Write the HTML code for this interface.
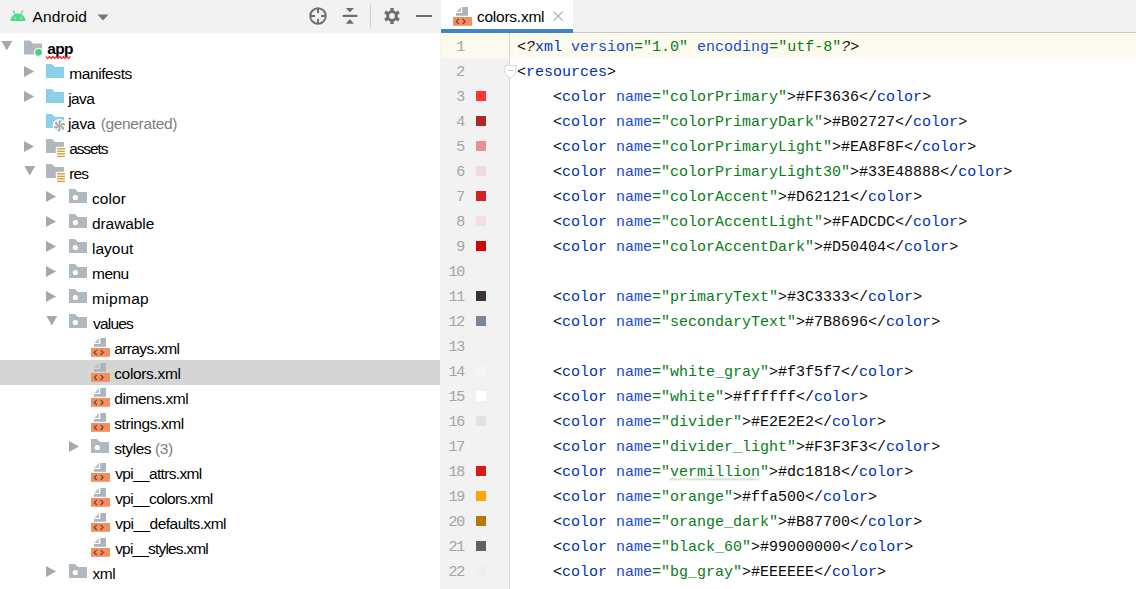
<!DOCTYPE html>
<html><head><meta charset="utf-8"><style>
*{margin:0;padding:0;box-sizing:border-box}
html,body{width:1136px;height:589px;overflow:hidden;background:#fff}
body{position:relative;font-family:"Liberation Sans",sans-serif}
#left{position:absolute;left:0;top:0;width:440px;height:589px;background:#fff;overflow:hidden}
#lhead{position:absolute;left:0;top:0;width:440px;height:33px;background:#f2f2f2}
#vsep{position:absolute;left:440px;top:0;width:1px;height:589px;background:#f3f3f3}
#right{position:absolute;left:441px;top:0;width:695px;height:589px;background:#fff;overflow:hidden}
#tabbar{position:absolute;left:0;top:0;width:695px;height:33px;background:#f2f2f2;border-bottom:1px solid #cacaca}
#tab{position:absolute;left:0;top:0;width:132px;height:33px;background:#fff}
#tabline{position:absolute;left:0;top:29px;width:132px;height:4px;background:#4083c9}
.ic{position:absolute;display:block}
.row{position:absolute;left:0;width:440px;height:25px;font-size:15.5px;color:#000;white-space:nowrap}
.row.sel{background:#d5d5d5}
.row .t{position:absolute;top:5px}
.gray{color:#808080}
.line{position:absolute;left:0;width:695px;height:25px;font-family:"Liberation Mono",monospace;font-size:15px;white-space:pre}
.line.cur{background:#fcfaed}
.ln{position:absolute;right:672px;top:6px;color:#a4a4a4;letter-spacing:-1.2px}
.code{position:absolute;left:76px;top:6px;color:#080808}
#gutter{position:absolute;left:0;top:33px;width:68px;height:556px;background:#f2f2f2}
#gsep{position:absolute;left:68px;top:33px;width:1px;height:556px;background:#d8d8d8}
.sw{position:absolute;left:35px;top:8px;width:10px;height:10px}
.tg{color:#0033b3}
.at{color:#174ad4}
.vl{color:#067d17}
#lhead .hname{position:absolute;left:32.6px;top:8px;font-size:15.5px;color:#000;letter-spacing:0.15px}
</style></head><body>
<div id="left">

<div id="lhead">
 <svg class="ic" style="left:10px;top:10px" width="17" height="12"><path d="M3.3 0.9 L5 4.3 M12.6 0.9 L10.9 4.3" stroke="#4bdd8a" stroke-width="1.25" stroke-linecap="round"/><path d="M0.4 10.9 A7.55 7.4 0 0 1 15.5 10.9 Z" fill="#4bdd8a"/><circle cx="4.8" cy="7.9" r="0.85" fill="#a8ecc4"/><circle cx="11.1" cy="7.9" r="0.85" fill="#a8ecc4"/></svg>
 <span class="hname">Android</span>
 <svg class="ic" style="left:97px;top:14px" width="12" height="7"><path d="M0.5 0.5 H11.5 L6 6.5 Z" fill="#767676"/></svg>
 <svg class="ic" style="left:309px;top:7px" width="18" height="18"><circle cx="9" cy="9" r="7.8" stroke="#6e6e6e" stroke-width="1.9" fill="none"/><path d="M9 1 V6 M9 12 V17 M1 9 H6 M12 9 H17" stroke="#6e6e6e" stroke-width="1.9"/></svg>
 <svg class="ic" style="left:342px;top:8px" width="16" height="16"><path d="M3.9 0.1 H11.9 L7.9 4.6 Z M3.9 15.8 H11.9 L7.9 11.1 Z" fill="#6e6e6e"/><rect x="0.5" y="6.8" width="15" height="2.2" rx="1" fill="#6e6e6e"/></svg>
 <div style="position:absolute;left:370px;top:4px;width:1px;height:24px;background:#cfcfcf"></div>
 <svg class="ic" style="left:384px;top:8px" width="16" height="16"><g fill="#6e6e6e"><circle cx="8" cy="8" r="5.8"/><rect x="6.3" y="0" width="3.4" height="16"/><rect x="6.3" y="0" width="3.4" height="16" transform="rotate(60 8 8)"/><rect x="6.3" y="0" width="3.4" height="16" transform="rotate(120 8 8)"/></g><circle cx="8" cy="8" r="2.9" fill="#f2f2f2"/></svg>
 <div style="position:absolute;left:416px;top:15px;width:16px;height:2px;background:#6e6e6e"></div>
</div>

<div class="row" style="top:35px"><svg class="ic" style="left:1px;top:0px" width="14" height="25"><path d="M0.4 6.1 H11.2 L5.8 15.4 Z" fill="#a8a8a8"/></svg><svg class="ic" style="left:24px;top:0px" width="22" height="25"><g transform="translate(0 5.6)"><path d="M0 0 H6 L9 3 H18 V14 H0 Z" fill="#afb8bf"/><circle cx="14.5" cy="11.7" r="4.6" fill="#fff"/><circle cx="14.5" cy="11.7" r="3.4" fill="#3dd67f"/></g></svg><span class="t" style="left:47.30px;letter-spacing:-0.750px"><b>app</b></span><svg class="ic" style="left:0;top:-35px" width="80" height="62"><polyline points="46.00,56.3 47.75,58.5 49.50,56.3 51.25,58.5 53.00,56.3 54.75,58.5 56.50,56.3 58.25,58.5 60.00,56.3 61.75,58.5 63.50,56.3 65.25,58.5 67.00,56.3 68.75,58.5 70.50,56.3" fill="none" stroke="#ff2020" stroke-width="1.1"/></svg></div><div class="row" style="top:60px"><svg class="ic" style="left:24px;top:0px" width="12" height="25"><path d="M0 6.1 V17.1 L10.1 11.6 Z" fill="#a8a8a8"/></svg><svg class="ic" style="left:46px;top:0px" width="22" height="25"><g transform="translate(0 4)"><path d="M0 0 H6 L9 3 H18 V14 H0 Z" fill="#8ccfe9"/></g></svg><span class="t" style="left:69.20px;letter-spacing:-0.400px">manifests</span></div><div class="row" style="top:85px"><svg class="ic" style="left:24px;top:0px" width="12" height="25"><path d="M0 6.1 V17.1 L10.1 11.6 Z" fill="#a8a8a8"/></svg><svg class="ic" style="left:46px;top:0px" width="22" height="25"><g transform="translate(0 4)"><path d="M0 0 H6 L9 3 H18 V14 H0 Z" fill="#8ccfe9"/></g></svg><span class="t" style="left:68.30px;letter-spacing:-0.637px">java</span></div><div class="row" style="top:110px"><svg class="ic" style="left:46px;top:0px" width="22" height="25"><g transform="translate(0 4)"><path d="M0 0 H6 L9 3 H18 V14 H0 Z" fill="#8ccfe9"/><circle cx="13.5" cy="11.8" r="6.9" fill="#fff"/><g fill="#9ca5ac" transform="translate(13.5 11.8)"><path d="M0 0 C-1.3 -1.8 -1.6 -3.9 -0.2 -5.1 C0.9 -5.7 2.1 -5.4 2.7 -4.7 C1.2 -4.3 0.4 -2.6 0 0 Z" transform="rotate(0)"/><path d="M0 0 C-1.3 -1.8 -1.6 -3.9 -0.2 -5.1 C0.9 -5.7 2.1 -5.4 2.7 -4.7 C1.2 -4.3 0.4 -2.6 0 0 Z" transform="rotate(60)"/><path d="M0 0 C-1.3 -1.8 -1.6 -3.9 -0.2 -5.1 C0.9 -5.7 2.1 -5.4 2.7 -4.7 C1.2 -4.3 0.4 -2.6 0 0 Z" transform="rotate(120)"/><path d="M0 0 C-1.3 -1.8 -1.6 -3.9 -0.2 -5.1 C0.9 -5.7 2.1 -5.4 2.7 -4.7 C1.2 -4.3 0.4 -2.6 0 0 Z" transform="rotate(180)"/><path d="M0 0 C-1.3 -1.8 -1.6 -3.9 -0.2 -5.1 C0.9 -5.7 2.1 -5.4 2.7 -4.7 C1.2 -4.3 0.4 -2.6 0 0 Z" transform="rotate(240)"/><path d="M0 0 C-1.3 -1.8 -1.6 -3.9 -0.2 -5.1 C0.9 -5.7 2.1 -5.4 2.7 -4.7 C1.2 -4.3 0.4 -2.6 0 0 Z" transform="rotate(300)"/><circle r="1.3"/></g></g></svg><span class="t" style="left:68.00px;letter-spacing:-0.340px">java<span class="gray" style="margin-left:1.6px"> (generated)</span></span></div><div class="row" style="top:135px"><svg class="ic" style="left:24px;top:0px" width="12" height="25"><path d="M0 6.1 V17.1 L10.1 11.6 Z" fill="#a8a8a8"/></svg><svg class="ic" style="left:46px;top:0px" width="22" height="25"><g transform="translate(0 4)"><path d="M0 0 H6 L9 3 H18 V14 H0 Z" fill="#afb8bf"/><rect x="9.8" y="7.8" width="10" height="12" fill="#fff"/><rect x="11.1" y="9" width="7.8" height="4" fill="#f7e8cc"/><rect x="11.1" y="9" width="7.8" height="1.4" fill="#e0a645"/><rect x="11.1" y="11.9" width="7.8" height="1.1" fill="#dd9f38"/><rect x="11.1" y="14.1" width="7.8" height="3.9" fill="#f7e8cc"/><rect x="11.1" y="14.1" width="7.8" height="1.4" fill="#e0a645"/><rect x="11.1" y="17" width="7.8" height="1.1" fill="#dd9f38"/></g></svg><span class="t" style="left:69.20px;letter-spacing:-1.120px">assets</span></div><div class="row" style="top:160px"><svg class="ic" style="left:24px;top:0px" width="14" height="25"><path d="M0.4 6.1 H11.2 L5.8 15.4 Z" fill="#a8a8a8"/></svg><svg class="ic" style="left:46px;top:0px" width="22" height="25"><g transform="translate(0 4)"><path d="M0 0 H6 L9 3 H18 V14 H0 Z" fill="#afb8bf"/><rect x="9.8" y="7.8" width="10" height="12" fill="#fff"/><rect x="11.1" y="9" width="7.8" height="4" fill="#f7e8cc"/><rect x="11.1" y="9" width="7.8" height="1.4" fill="#e0a645"/><rect x="11.1" y="11.9" width="7.8" height="1.1" fill="#dd9f38"/><rect x="11.1" y="14.1" width="7.8" height="3.9" fill="#f7e8cc"/><rect x="11.1" y="14.1" width="7.8" height="1.4" fill="#e0a645"/><rect x="11.1" y="17" width="7.8" height="1.1" fill="#dd9f38"/></g></svg><span class="t" style="left:69.20px;letter-spacing:-0.900px">res</span></div><div class="row" style="top:185px"><svg class="ic" style="left:46px;top:0px" width="12" height="25"><path d="M0 6.1 V17.1 L10.1 11.6 Z" fill="#a8a8a8"/></svg><svg class="ic" style="left:69px;top:0px" width="22" height="25"><g transform="translate(0 4)"><path d="M0 0 H6 L9 3 H18 V14 H0 Z" fill="#afb8bf"/><circle cx="6.35" cy="8.5" r="2.6" fill="#fff"/></g></svg><span class="t" style="left:92.00px;letter-spacing:0.100px">color</span></div><div class="row" style="top:210px"><svg class="ic" style="left:46px;top:0px" width="12" height="25"><path d="M0 6.1 V17.1 L10.1 11.6 Z" fill="#a8a8a8"/></svg><svg class="ic" style="left:69px;top:0px" width="22" height="25"><g transform="translate(0 4)"><path d="M0 0 H6 L9 3 H18 V14 H0 Z" fill="#afb8bf"/><circle cx="6.35" cy="8.5" r="2.6" fill="#fff"/></g></svg><span class="t" style="left:92.00px;letter-spacing:-0.086px">drawable</span></div><div class="row" style="top:235px"><svg class="ic" style="left:46px;top:0px" width="12" height="25"><path d="M0 6.1 V17.1 L10.1 11.6 Z" fill="#a8a8a8"/></svg><svg class="ic" style="left:69px;top:0px" width="22" height="25"><g transform="translate(0 4)"><path d="M0 0 H6 L9 3 H18 V14 H0 Z" fill="#afb8bf"/><circle cx="6.35" cy="8.5" r="2.6" fill="#fff"/></g></svg><span class="t" style="left:92.00px;letter-spacing:-0.000px">layout</span></div><div class="row" style="top:260px"><svg class="ic" style="left:46px;top:0px" width="12" height="25"><path d="M0 6.1 V17.1 L10.1 11.6 Z" fill="#a8a8a8"/></svg><svg class="ic" style="left:69px;top:0px" width="22" height="25"><g transform="translate(0 4)"><path d="M0 0 H6 L9 3 H18 V14 H0 Z" fill="#afb8bf"/><circle cx="6.35" cy="8.5" r="2.6" fill="#fff"/></g></svg><span class="t" style="left:92.00px;letter-spacing:-0.533px">menu</span></div><div class="row" style="top:285px"><svg class="ic" style="left:46px;top:0px" width="12" height="25"><path d="M0 6.1 V17.1 L10.1 11.6 Z" fill="#a8a8a8"/></svg><svg class="ic" style="left:69px;top:0px" width="22" height="25"><g transform="translate(0 4)"><path d="M0 0 H6 L9 3 H18 V14 H0 Z" fill="#afb8bf"/><circle cx="6.35" cy="8.5" r="2.6" fill="#fff"/></g></svg><span class="t" style="left:92.00px;letter-spacing:0.320px">mipmap</span></div><div class="row" style="top:310px"><svg class="ic" style="left:46px;top:0px" width="14" height="25"><path d="M0.4 6.1 H11.2 L5.8 15.4 Z" fill="#a8a8a8"/></svg><svg class="ic" style="left:69px;top:0px" width="22" height="25"><g transform="translate(0 4)"><path d="M0 0 H6 L9 3 H18 V14 H0 Z" fill="#afb8bf"/><circle cx="6.35" cy="8.5" r="2.6" fill="#fff"/></g></svg><span class="t" style="left:93.00px;letter-spacing:-0.800px">values</span></div><div class="row" style="top:335px"><svg class="ic" style="left:91px;top:0px" width="20" height="25"><path d="M3 3 H15 V11.7 H3 Z M3 3 V9.1 H9.3 V3 Z" fill="#abb5bd" fill-rule="evenodd"/><path d="M3.3 7.9 L7.9 3.0 V7.9 Z" fill="#b9c1c7"/><rect x="0" y="13" width="19" height="8.8" fill="#f58e5c"/><path d="M5.8 14.8 L3.3 17.4 L5.8 20 M9.6 14.8 L12.1 17.4 L9.6 20" stroke="#6a4634" stroke-width="1.2" fill="none"/></svg><span class="t" style="left:114.20px;letter-spacing:-0.622px">arrays.xml</span></div><div class="row sel" style="top:360px"><svg class="ic" style="left:91px;top:0px" width="20" height="25"><path d="M3 3 H15 V11.7 H3 Z M3 3 V9.1 H9.3 V3 Z" fill="#abb5bd" fill-rule="evenodd"/><path d="M3.3 7.9 L7.9 3.0 V7.9 Z" fill="#b9c1c7"/><rect x="0" y="13" width="19" height="8.8" fill="#f58e5c"/><path d="M5.8 14.8 L3.3 17.4 L5.8 20 M9.6 14.8 L12.1 17.4 L9.6 20" stroke="#6a4634" stroke-width="1.2" fill="none"/></svg><span class="t" style="left:114.20px;letter-spacing:-0.333px">colors.xml</span></div><div class="row" style="top:385px"><svg class="ic" style="left:91px;top:0px" width="20" height="25"><path d="M3 3 H15 V11.7 H3 Z M3 3 V9.1 H9.3 V3 Z" fill="#abb5bd" fill-rule="evenodd"/><path d="M3.3 7.9 L7.9 3.0 V7.9 Z" fill="#b9c1c7"/><rect x="0" y="13" width="19" height="8.8" fill="#f58e5c"/><path d="M5.8 14.8 L3.3 17.4 L5.8 20 M9.6 14.8 L12.1 17.4 L9.6 20" stroke="#6a4634" stroke-width="1.2" fill="none"/></svg><span class="t" style="left:114.20px;letter-spacing:-0.422px">dimens.xml</span></div><div class="row" style="top:410px"><svg class="ic" style="left:91px;top:0px" width="20" height="25"><path d="M3 3 H15 V11.7 H3 Z M3 3 V9.1 H9.3 V3 Z" fill="#abb5bd" fill-rule="evenodd"/><path d="M3.3 7.9 L7.9 3.0 V7.9 Z" fill="#b9c1c7"/><rect x="0" y="13" width="19" height="8.8" fill="#f58e5c"/><path d="M5.8 14.8 L3.3 17.4 L5.8 20 M9.6 14.8 L12.1 17.4 L9.6 20" stroke="#6a4634" stroke-width="1.2" fill="none"/></svg><span class="t" style="left:114.20px;letter-spacing:-0.400px">strings.xml</span></div><div class="row" style="top:435px"><svg class="ic" style="left:69px;top:0px" width="12" height="25"><path d="M0 6.1 V17.1 L10.1 11.6 Z" fill="#a8a8a8"/></svg><svg class="ic" style="left:91px;top:0px" width="22" height="25"><g transform="translate(0 4)"><path d="M0 0 H6 L9 3 H18 V14 H0 Z" fill="#afb8bf"/><circle cx="6.35" cy="8.5" r="2.6" fill="#fff"/></g></svg><span class="t" style="left:114.20px;letter-spacing:-0.444px">styles<span class="gray" style="margin-left:0px"> (3)</span></span></div><div class="row" style="top:460px"><svg class="ic" style="left:91px;top:0px" width="20" height="25"><path d="M3 3 H15 V11.7 H3 Z M3 3 V9.1 H9.3 V3 Z" fill="#abb5bd" fill-rule="evenodd"/><path d="M3.3 7.9 L7.9 3.0 V7.9 Z" fill="#b9c1c7"/><rect x="0" y="13" width="19" height="8.8" fill="#f58e5c"/><path d="M5.8 14.8 L3.3 17.4 L5.8 20 M9.6 14.8 L12.1 17.4 L9.6 20" stroke="#6a4634" stroke-width="1.2" fill="none"/></svg><span class="t" style="left:115.20px;letter-spacing:-0.662px">vpi__attrs.xml</span></div><div class="row" style="top:485px"><svg class="ic" style="left:91px;top:0px" width="20" height="25"><path d="M3 3 H15 V11.7 H3 Z M3 3 V9.1 H9.3 V3 Z" fill="#abb5bd" fill-rule="evenodd"/><path d="M3.3 7.9 L7.9 3.0 V7.9 Z" fill="#b9c1c7"/><rect x="0" y="13" width="19" height="8.8" fill="#f58e5c"/><path d="M5.8 14.8 L3.3 17.4 L5.8 20 M9.6 14.8 L12.1 17.4 L9.6 20" stroke="#6a4634" stroke-width="1.2" fill="none"/></svg><span class="t" style="left:115.20px;letter-spacing:-0.629px">vpi__colors.xml</span></div><div class="row" style="top:510px"><svg class="ic" style="left:91px;top:0px" width="20" height="25"><path d="M3 3 H15 V11.7 H3 Z M3 3 V9.1 H9.3 V3 Z" fill="#abb5bd" fill-rule="evenodd"/><path d="M3.3 7.9 L7.9 3.0 V7.9 Z" fill="#b9c1c7"/><rect x="0" y="13" width="19" height="8.8" fill="#f58e5c"/><path d="M5.8 14.8 L3.3 17.4 L5.8 20 M9.6 14.8 L12.1 17.4 L9.6 20" stroke="#6a4634" stroke-width="1.2" fill="none"/></svg><span class="t" style="left:115.20px;letter-spacing:-0.525px">vpi__defaults.xml</span></div><div class="row" style="top:535px"><svg class="ic" style="left:91px;top:0px" width="20" height="25"><path d="M3 3 H15 V11.7 H3 Z M3 3 V9.1 H9.3 V3 Z" fill="#abb5bd" fill-rule="evenodd"/><path d="M3.3 7.9 L7.9 3.0 V7.9 Z" fill="#b9c1c7"/><rect x="0" y="13" width="19" height="8.8" fill="#f58e5c"/><path d="M5.8 14.8 L3.3 17.4 L5.8 20 M9.6 14.8 L12.1 17.4 L9.6 20" stroke="#6a4634" stroke-width="1.2" fill="none"/></svg><span class="t" style="left:115.20px;letter-spacing:-0.829px">vpi__styles.xml</span></div><div class="row" style="top:560px"><svg class="ic" style="left:46px;top:0px" width="12" height="25"><path d="M0 6.1 V17.1 L10.1 11.6 Z" fill="#a8a8a8"/></svg><svg class="ic" style="left:69px;top:0px" width="22" height="25"><g transform="translate(0 4)"><path d="M0 0 H6 L9 3 H18 V14 H0 Z" fill="#afb8bf"/><circle cx="6.35" cy="8.5" r="2.6" fill="#fff"/></g></svg><span class="t" style="left:92.60px;letter-spacing:-0.500px">xml</span></div>
</div>
<div id="vsep"></div>
<div id="right">

<div id="tabbar"></div>
<div id="tab">
 <svg class="ic" style="left:12px;top:4.2px" width="20" height="25"><path d="M3 3 H15 V11.7 H3 Z M3 3 V9.1 H9.3 V3 Z" fill="#abb5bd" fill-rule="evenodd"/><path d="M3.3 7.9 L7.9 3.0 V7.9 Z" fill="#b9c1c7"/><rect x="0" y="13" width="19" height="8.8" fill="#f58e5c"/><path d="M5.8 14.8 L3.3 17.4 L5.8 20 M9.6 14.8 L12.1 17.4 L9.6 20" stroke="#6a4634" stroke-width="1.2" fill="none"/></svg>
 <span style="position:absolute;left:36px;top:8px;font-size:15.5px;color:#000;letter-spacing:-0.25px">colors.xml</span>
 <svg class="ic" style="left:112px;top:11px" width="11" height="11"><path d="M0.6 0.6 L9.6 9.6 M9.6 0.6 L0.6 9.6" stroke="#a6a6a6" stroke-width="1.1"/></svg>
</div>
<div id="tabline"></div>

<div id="gutter"></div>
<div class="line cur" style="top:33px"><span class="ln">1</span><span class="code">&lt;<i>?</i><span class="tg">xml</span> <span class="at">version</span><span class="vl">="1.0"</span> <span class="at">encoding</span><span class="vl">="utf-8"</span><i>?</i>&gt;</span></div><div class="line" style="top:58px"><span class="ln">2</span><span class="code">&lt;<span class="tg">resources</span>&gt;</span></div><div class="line" style="top:83px"><span class="ln">3</span><div class="sw" style="background:#FF3636"></div><span class="code">    &lt;<span class="tg">color</span> <span class="at">name</span><span class="vl">="colorPrimary"</span>&gt;#FF3636&lt;/<span class="tg">color</span>&gt;</span></div><div class="line" style="top:108px"><span class="ln">4</span><div class="sw" style="background:#B02727"></div><span class="code">    &lt;<span class="tg">color</span> <span class="at">name</span><span class="vl">="colorPrimaryDark"</span>&gt;#B02727&lt;/<span class="tg">color</span>&gt;</span></div><div class="line" style="top:133px"><span class="ln">5</span><div class="sw" style="background:#EA8F8F"></div><span class="code">    &lt;<span class="tg">color</span> <span class="at">name</span><span class="vl">="colorPrimaryLight"</span>&gt;#EA8F8F&lt;/<span class="tg">color</span>&gt;</span></div><div class="line" style="top:158px"><span class="ln">6</span><div class="sw" style="background:rgb(238,219,219)"></div><span class="code">    &lt;<span class="tg">color</span> <span class="at">name</span><span class="vl">="colorPrimaryLight30"</span>&gt;#33E48888&lt;/<span class="tg">color</span>&gt;</span></div><div class="line" style="top:183px"><span class="ln">7</span><div class="sw" style="background:#D62121"></div><span class="code">    &lt;<span class="tg">color</span> <span class="at">name</span><span class="vl">="colorAccent"</span>&gt;#D62121&lt;/<span class="tg">color</span>&gt;</span></div><div class="line" style="top:208px"><span class="ln">8</span><div class="sw" style="background:#FADCDC"></div><span class="code">    &lt;<span class="tg">color</span> <span class="at">name</span><span class="vl">="colorAccentLight"</span>&gt;#FADCDC&lt;/<span class="tg">color</span>&gt;</span></div><div class="line" style="top:233px"><span class="ln">9</span><div class="sw" style="background:#D50404"></div><span class="code">    &lt;<span class="tg">color</span> <span class="at">name</span><span class="vl">="colorAccentDark"</span>&gt;#D50404&lt;/<span class="tg">color</span>&gt;</span></div><div class="line" style="top:258px"><span class="ln">10</span><span class="code"></span></div><div class="line" style="top:283px"><span class="ln">11</span><div class="sw" style="background:#3C3333"></div><span class="code">    &lt;<span class="tg">color</span> <span class="at">name</span><span class="vl">="primaryText"</span>&gt;#3C3333&lt;/<span class="tg">color</span>&gt;</span></div><div class="line" style="top:308px"><span class="ln">12</span><div class="sw" style="background:#7B8696"></div><span class="code">    &lt;<span class="tg">color</span> <span class="at">name</span><span class="vl">="secondaryText"</span>&gt;#7B8696&lt;/<span class="tg">color</span>&gt;</span></div><div class="line" style="top:333px"><span class="ln">13</span><span class="code"></span></div><div class="line" style="top:358px"><span class="ln">14</span><div class="sw" style="background:#f3f5f7"></div><span class="code">    &lt;<span class="tg">color</span> <span class="at">name</span><span class="vl">="white_gray"</span>&gt;#f3f5f7&lt;/<span class="tg">color</span>&gt;</span></div><div class="line" style="top:383px"><span class="ln">15</span><div class="sw" style="background:#ffffff"></div><span class="code">    &lt;<span class="tg">color</span> <span class="at">name</span><span class="vl">="white"</span>&gt;#ffffff&lt;/<span class="tg">color</span>&gt;</span></div><div class="line" style="top:408px"><span class="ln">16</span><div class="sw" style="background:#E2E2E2"></div><span class="code">    &lt;<span class="tg">color</span> <span class="at">name</span><span class="vl">="divider"</span>&gt;#E2E2E2&lt;/<span class="tg">color</span>&gt;</span></div><div class="line" style="top:433px"><span class="ln">17</span><div class="sw" style="background:#F3F3F3"></div><span class="code">    &lt;<span class="tg">color</span> <span class="at">name</span><span class="vl">="divider_light"</span>&gt;#F3F3F3&lt;/<span class="tg">color</span>&gt;</span></div><div class="line" style="top:458px"><span class="ln">18</span><div class="sw" style="background:#dc1818"></div><span class="code">    &lt;<span class="tg">color</span> <span class="at">name</span><span class="vl">="vermillion"</span>&gt;#dc1818&lt;/<span class="tg">color</span>&gt;</span></div><div class="line" style="top:483px"><span class="ln">19</span><div class="sw" style="background:#ffa500"></div><span class="code">    &lt;<span class="tg">color</span> <span class="at">name</span><span class="vl">="orange"</span>&gt;#ffa500&lt;/<span class="tg">color</span>&gt;</span></div><div class="line" style="top:508px"><span class="ln">20</span><div class="sw" style="background:#B87700"></div><span class="code">    &lt;<span class="tg">color</span> <span class="at">name</span><span class="vl">="orange_dark"</span>&gt;#B87700&lt;/<span class="tg">color</span>&gt;</span></div><div class="line" style="top:533px"><span class="ln">21</span><div class="sw" style="background:rgb(96,96,96)"></div><span class="code">    &lt;<span class="tg">color</span> <span class="at">name</span><span class="vl">="black_60"</span>&gt;#99000000&lt;/<span class="tg">color</span>&gt;</span></div><div class="line" style="top:558px"><span class="ln">22</span><div class="sw" style="background:#EEEEEE"></div><span class="code">    &lt;<span class="tg">color</span> <span class="at">name</span><span class="vl">="bg_gray"</span>&gt;#EEEEEE&lt;/<span class="tg">color</span>&gt;</span></div>
<div id="gsep"></div>
<div style="position:absolute;left:75px;top:33px;width:1px;height:25px;background:#fefefe"></div>
<svg class="ic" style="left:62px;top:64px" width="14" height="16"><path d="M1.9 1.4 H13 V9.3 L7.5 14.2 L1.9 9.3 Z" fill="#fff" stroke="#d6d6d6" stroke-width="1"/><path d="M4.9 6.4 H10" stroke="#c4c4c4" stroke-width="1"/></svg>
<svg class="ic" style="left:0;top:0" width="695" height="589"><polyline points="228.00,478.2 229.50,480.4 231.00,478.2 232.50,480.4 234.00,478.2 235.50,480.4 237.00,478.2 238.50,480.4 240.00,478.2 241.50,480.4 243.00,478.2 244.50,480.4 246.00,478.2 247.50,480.4 249.00,478.2 250.50,480.4 252.00,478.2 253.50,480.4 255.00,478.2 256.50,480.4 258.00,478.2 259.50,480.4 261.00,478.2 262.50,480.4 264.00,478.2 265.50,480.4 267.00,478.2 268.50,480.4 270.00,478.2 271.50,480.4 273.00,478.2 274.50,480.4 276.00,478.2 277.50,480.4 279.00,478.2 280.50,480.4 282.00,478.2 283.50,480.4 285.00,478.2 286.50,480.4 288.00,478.2 289.50,480.4 291.00,478.2 292.50,480.4 294.00,478.2 295.50,480.4 297.00,478.2 298.50,480.4 300.00,478.2 301.50,480.4 303.00,478.2 304.50,480.4 306.00,478.2 307.50,480.4 309.00,478.2 310.50,480.4 312.00,478.2 313.50,480.4 315.00,478.2 316.50,480.4 318.00,478.2" fill="none" stroke="#b4d4b4" stroke-width="0.9"/></svg>
</div>
</body></html>
